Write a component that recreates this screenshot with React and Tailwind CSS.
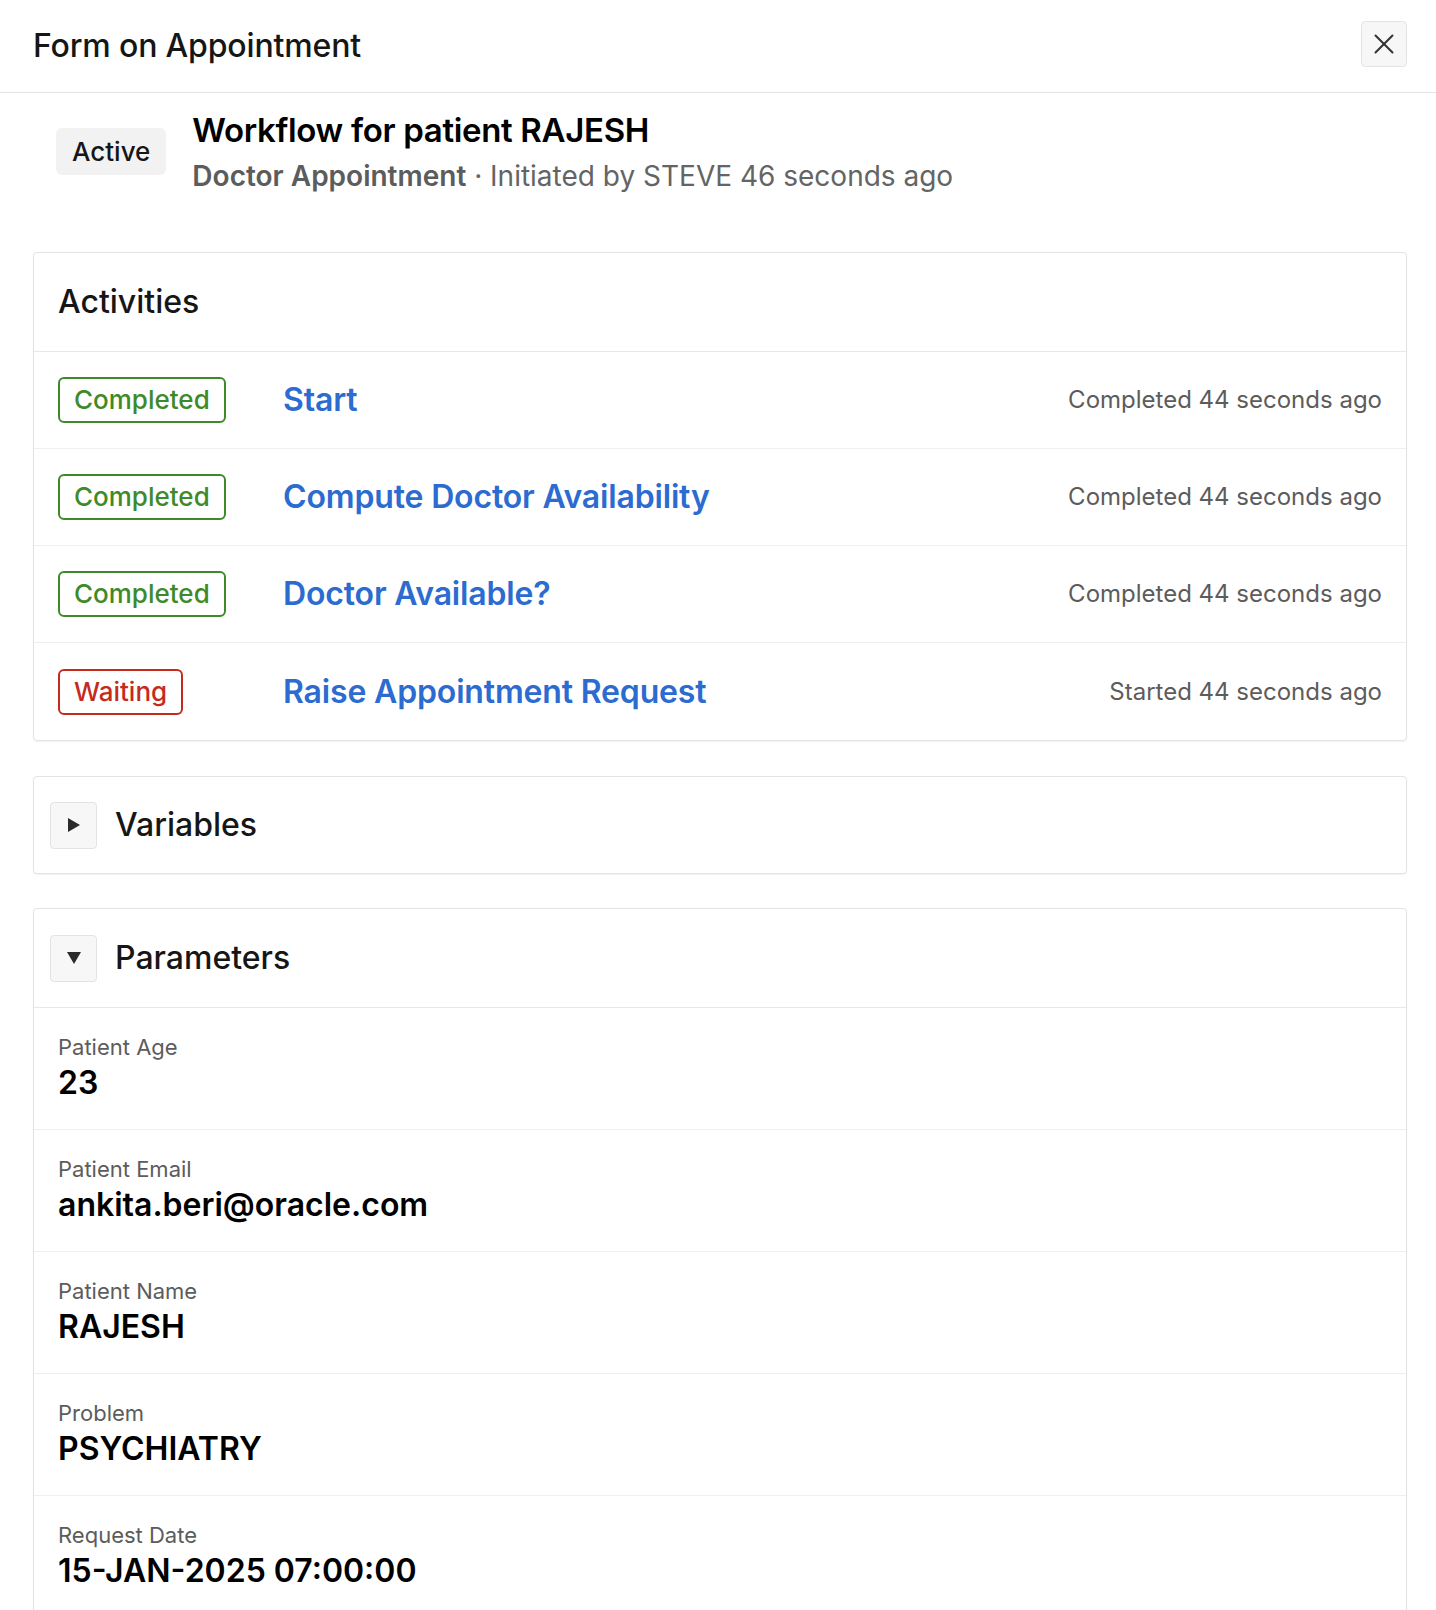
import { X } from "lucide-react";

const activities = [
  { status: "Completed", name: "Start", time: "Completed 44 seconds ago" },
  { status: "Completed", name: "Compute Doctor Availability", time: "Completed 44 seconds ago" },
  { status: "Completed", name: "Doctor Available?", time: "Completed 44 seconds ago" },
  { status: "Waiting", name: "Raise Appointment Request", time: "Started 44 seconds ago" },
];

const parameters = [
  { label: "Patient Age", value: "23" },
  { label: "Patient Email", value: "ankita.beri@oracle.com" },
  { label: "Patient Name", value: "RAJESH" },
  { label: "Problem", value: "PSYCHIATRY" },
  { label: "Request Date", value: "15-JAN-2025 07:00:00" },
];

const StatusBadge = ({ status }) => {
  const done = status === "Completed";
  return (
    <span
      className={`inline-flex h-[46px] items-center rounded-[6px] border-2 px-[14px] text-[26px] font-medium leading-none ${
        done ? "border-[#3f8a28] text-[#3f8a28]" : "border-[#c52b1d] text-[#c52b1d]"
      }`}
    >
      {status}
    </span>
  );
};

const ToggleButton = ({ open }) => (
  <button
    type="button"
    className="flex h-[47px] w-[47px] items-center justify-center rounded-[4px] border border-[#e3e3e3] bg-[#f7f7f7] text-[#2b2b2b]"
  >
    {open ? (
      <svg width="16" height="14" viewBox="0 0 16 14">
        <path d="M1 1h14L8 13z" fill="currentColor" />
      </svg>
    ) : (
      <svg width="14" height="16" viewBox="0 0 14 16">
        <path d="M1 1v14l12-7z" fill="currentColor" />
      </svg>
    )}
  </button>
);

export default function App() {
  return (
    <div className="min-h-screen bg-white font-['Inter','Liberation_Sans',sans-serif] text-[#161616]">
      <header className="flex h-[93px] items-center justify-between border-b border-[#e3e3e3] pl-[33px] pr-[29px]">
        <h1 className="text-[32px] font-medium tracking-[-0.005em]">Form on Appointment</h1>
        <button
          type="button"
          className="mb-[4px] flex h-[46px] w-[46px] items-center justify-center rounded-[4px] border border-[#e3e3e3] bg-[#f7f7f7] text-[#333]"
        >
          <X size={34} strokeWidth={1.4} />
        </button>
      </header>

      <main className="pl-[33px] pr-[29px]">
        <section className="flex items-start gap-[26px] pl-[23px] pt-[16px]">
          <span className="mt-[19px] inline-flex h-[47px] items-center rounded-[6px] bg-[#f2f2f2] px-[16px] text-[26px] font-medium">
            Active
          </span>
          <div>
            <h2 className="text-[33px] font-semibold leading-[42px] tracking-[-0.01em] text-black">
              Workflow for patient RAJESH
            </h2>
            <p className="mt-[6px] text-[28px] leading-[38px] text-[#646464]">
              <span className="font-semibold text-[#5c5c5c]">Doctor Appointment</span> · Initiated by STEVE 46
              seconds ago
            </p>
          </div>
        </section>

        <section className="mt-[57px] rounded-[4px] border border-[#e3e3e3] shadow-[0_1px_2px_rgba(0,0,0,0.06)]">
          <div className="flex h-[99px] items-center border-b border-[#e8e8e8] px-[24px]">
            <h3 className="text-[32px] font-medium">Activities</h3>
          </div>
          {activities.map((activity, index) => (
            <div
              key={activity.name}
              className={`flex h-[97px] items-center px-[24px] ${
                index < activities.length - 1 ? "border-b border-[#efefef]" : ""
              }`}
            >
              <div className="w-[225px] shrink-0">
                <StatusBadge status={activity.status} />
              </div>
              <span className="text-[32px] font-semibold tracking-[-0.005em] text-[#2c6bd0]">{activity.name}</span>
              <span className="ml-auto text-[24px] text-[#5c5c5c]">{activity.time}</span>
            </div>
          ))}
        </section>

        <section className="mt-[35px] flex h-[98px] items-center gap-[18px] rounded-[4px] border border-[#e3e3e3] px-[16px] shadow-[0_1px_2px_rgba(0,0,0,0.06)]">
          <ToggleButton open={false} />
          <h3 className="text-[32px] font-medium">Variables</h3>
        </section>

        <section className="mt-[34px] rounded-[4px] border border-[#e3e3e3] shadow-[0_1px_2px_rgba(0,0,0,0.06)]">
          <div className="flex h-[99px] items-center gap-[18px] border-b border-[#e8e8e8] px-[16px]">
            <ToggleButton open />
            <h3 className="text-[32px] font-medium">Parameters</h3>
          </div>
          {parameters.map((param, index) => (
            <div
              key={param.label}
              className={`flex h-[122px] flex-col justify-center px-[24px] pb-[2px] ${
                index < parameters.length - 1 ? "border-b border-[#efefef]" : ""
              }`}
            >
              <span className="text-[22px] leading-[30px] text-[#5c5c5c]">{param.label}</span>
              <span className="text-[32px] font-semibold leading-[42px] text-black">{param.value}</span>
            </div>
          ))}
        </section>
      </main>
    </div>
  );
}
